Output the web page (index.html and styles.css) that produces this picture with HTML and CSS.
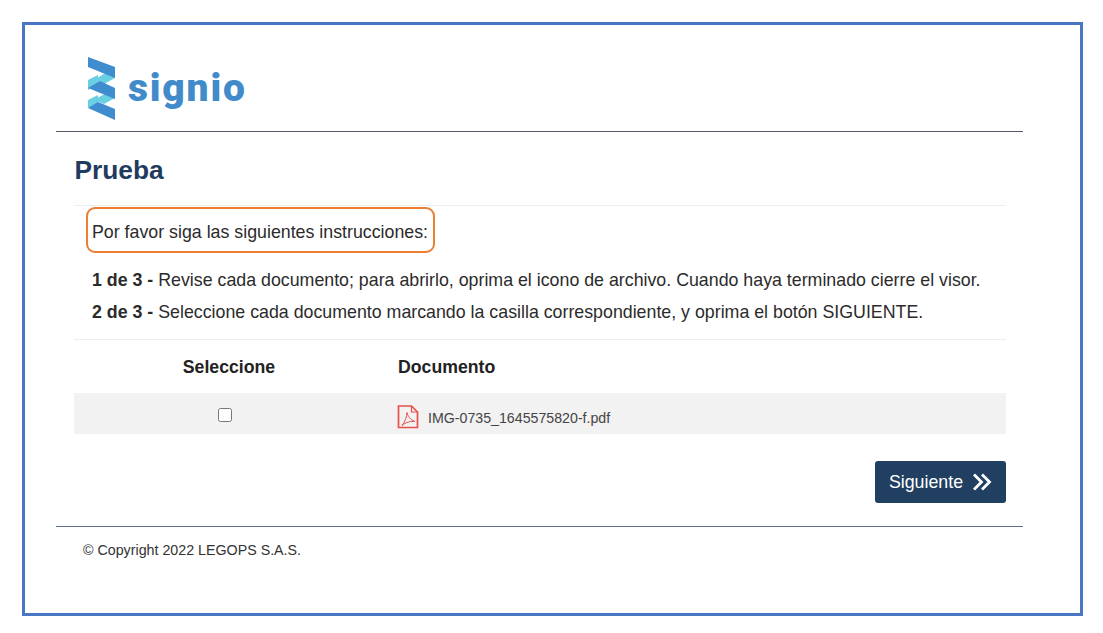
FILE: index.html
```html
<!DOCTYPE html>
<html lang="es">
<head>
<meta charset="utf-8">
<title>Prueba</title>
<link rel="stylesheet" href="styles.css">
</head>
<body>
<main class="frame">
  <header class="brand">
    <svg class="logo-mark" width="36" height="68" viewBox="0 0 36 68" aria-hidden="true">
      <polygon points="4,26 14,21 14,30 4,36" fill="#69cfe3"/>
      <polygon points="4,46 14,41 14,49 4,54" fill="#69cfe3"/>
      <polygon points="31,13 31,24 20,30 10,26" fill="#69cfe3"/>
      <polygon points="31,34 31,44 20,50 10,46" fill="#69cfe3"/>
      <polygon points="4,3 31,13 31,24 4,13" fill="#3f8ccf"/>
      <polygon points="4,34 16,27 31,34 31,45" fill="#3f8ccf"/>
      <polygon points="4,54 14,48 31,55 31,66" fill="#3f8ccf"/>
    </svg>
    <span class="logo-word">signio</span>
  </header>

  <section class="content">
    <h1 class="title">Prueba</h1>
    <div class="instructions">
      <p class="callout">Por favor siga las siguientes instrucciones:</p>
      <p class="step"><b>1 de 3 -</b> Revise cada documento; para abrirlo, oprima el icono de archivo. Cuando haya terminado cierre el visor.</p>
      <p class="step"><b>2 de 3 -</b> Seleccione cada documento marcando la casilla correspondiente, y oprima el botón SIGUIENTE.</p>
    </div>

    <div class="table">
      <div class="row head">
        <div class="col-select">Seleccione</div>
        <div class="col-doc">Documento</div>
      </div>
      <div class="row item">
        <div class="col-select"><input class="check" type="checkbox" aria-label="Seleccionar"></div>
        <div class="col-doc file">
          <svg class="pdf" width="22" height="24" viewBox="0 0 22 24" fill="none" stroke="#e8504a" stroke-width="1.700" aria-hidden="true">
            <path d="M1.500 1h13l6 6v15.500H1.500z"/>
            <path d="M14.500 1v6h6" stroke-width="1.200"/>
            <path d="M10 7.500c1 4 3 7 8 9-4-.5-9 .5-13 4 3-3.500 5-9 5-13z" stroke-width="1"/>
          </svg>
          <span>IMG-0735_1645575820-f.pdf</span>
        </div>
      </div>
    </div>

    <div class="actions">
      <button class="next" type="button">Siguiente
        <svg width="20" height="18" viewBox="0 0 20 18" fill="none" stroke="#fff" stroke-width="2.800" aria-hidden="true">
          <path d="M2 1.500l7.500 7.500L2 16.500M10 1.500l7.500 7.500L10 16.500"/>
        </svg>
      </button>
    </div>
  </section>

  <footer class="foot">© Copyright 2022 LEGOPS S.A.S.</footer>
</main>
</body>
</html>
```
FILE: styles.css
```css
* { box-sizing: border-box; }
html, body { margin: 0; background: #fff; }
body {
  width: 1103px;
  height: 633px;
  padding: 22px 20px 17px 22px;
  font-family: "Liberation Sans", Arial, sans-serif;
  color: #2b2b2b;
  overflow: hidden;
}
.frame {
  width: 1061px;
  height: 594px;
  border: 3px solid #4a76c6;
  padding: 0 57px 0 31px;
}
.brand {
  height: 107px;
  border-bottom: 1px solid #555c66;
  display: flex;
  align-items: flex-start;
  padding: 29px 0 0 28px;
  gap: 8px;
}
.logo-mark { flex: none; }
.logo-word {
  font-family: Roboto, sans-serif;
  font-weight: 900;
  font-size: 39px;
  line-height: 44px;
  letter-spacing: 1.800px;
  color: #428bca;
  margin-top: 12px;
}
.content { padding: 0 17px 0 18px; }
.title {
  margin: 0;
  height: 74px;
  font-size: 26.300px;
  line-height: 30px;
  padding: 23px 0 0 0.5px;
  font-weight: 700;
  color: #1f3c5e;
  border-bottom: 1px solid #eeeeee;
}
.instructions {
  padding: 1px 0 15px 12px;
  border-bottom: 1px solid #eeeeee;
  font-size: 17.800px;
  line-height: 24px;
}
.instructions p { margin: 0; }
.callout {
  display: inline-block;
  border: 2px solid #ed7d31;
  border-radius: 9px;
  padding: 11px 5px 7px 4px;
  margin-bottom: 15px !important;
  vertical-align: top;
}
.step { padding-left: 6px; margin-bottom: 8px !important; white-space: nowrap; }
.step:last-child { margin-bottom: 0 !important; }
.table { font-size: 17.700px; }
.row { display: flex; align-items: center; }
.head { height: 53px; font-weight: 700; color: #222; padding-top: 2px; }
.head .col-select { padding-left: 9px; }
.item { height: 41px; background: #f2f2f2; font-size: 14.200px; color: #444; }
.col-select { width: 301px; text-align: center; }
.col-doc { padding-left: 23px; }
.file { display: flex; align-items: center; gap: 9px; padding-top: 8px; }
.pdf { flex: none; margin: -2px 0 0 -1px; }
.check { width: 14px; height: 14px; margin: 2px 0 0; display: inline-block; vertical-align: middle; }
.actions { display: flex; justify-content: flex-end; padding-top: 27px; }
.next {
  width: 131px;
  height: 42px;
  background: #213f60;
  border: 0;
  border-radius: 3px;
  color: #fff;
  font: 400 17.800px "Liberation Sans", Arial, sans-serif;
  display: flex;
  align-items: center;
  justify-content: center;
  gap: 9px;
  padding: 0;
}
.foot {
  margin-top: 23px;
  border-top: 1px solid #5d6f8c;
  padding: 15px 0 0 27px;
  font-size: 14.250px;
  line-height: 17px;
  color: #333;
}
```
